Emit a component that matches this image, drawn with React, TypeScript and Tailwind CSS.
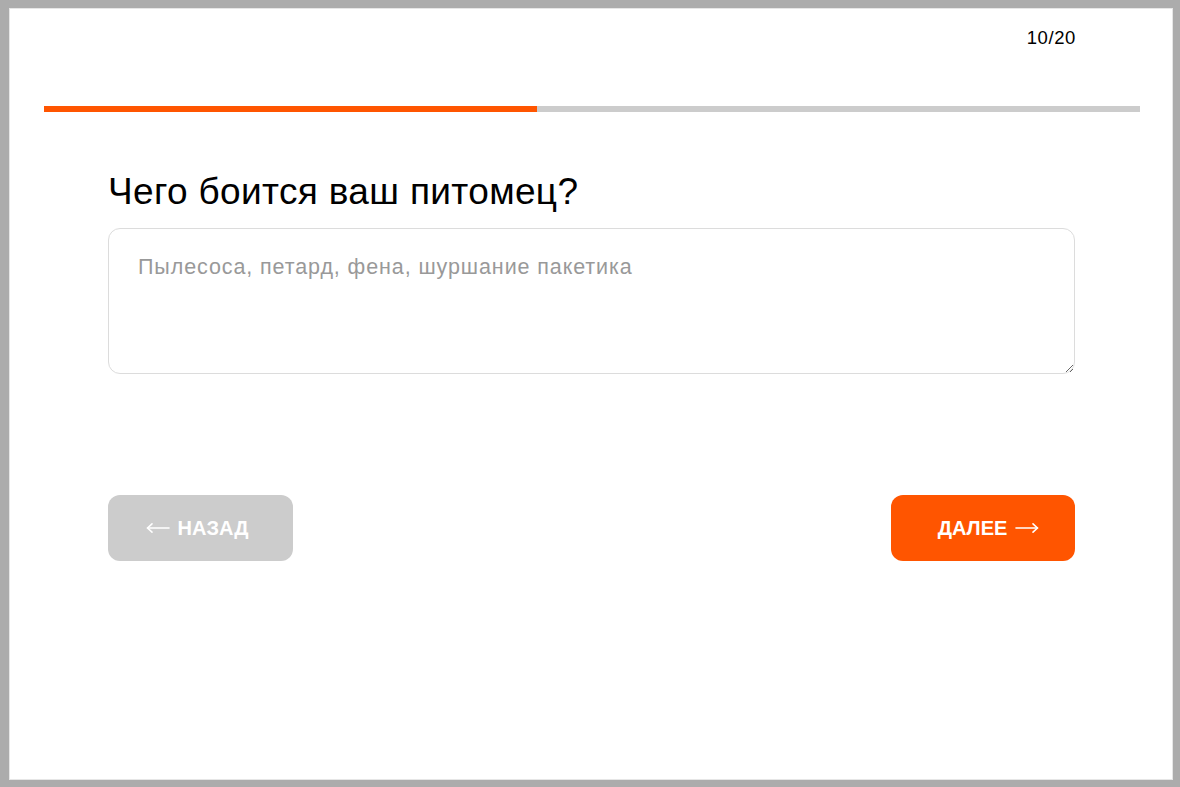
import React, { useState } from 'react';

function LongArrow({ dir }: { dir: 'left' | 'right' }) {
  return (
    <svg width="24" height="12" viewBox="0 0 24 12" fill="none" stroke="currentColor" strokeWidth="1.6" strokeLinecap="round" strokeLinejoin="round">
      {dir === 'left' ? (
        <>
          <path d="M23 6H1.5" />
          <path d="M6 1.8L1.5 6L6 10.2" />
        </>
      ) : (
        <>
          <path d="M1 6h21.5" />
          <path d="M18 1.8L22.5 6L18 10.2" />
        </>
      )}
    </svg>
  );
}

export default function App() {
  const [answer, setAnswer] = useState('');
  const step = 10;
  const total = 20;

  return (
    <div className="min-h-screen w-full bg-[#acacac] pt-[8px] pl-[9px] pr-[7px] pb-[7px] font-['Liberation_Sans',Arial,sans-serif]">
      <div className="h-[772px] bg-white border border-[#e6e6e6]">
        {/* Counter */}
        <div className="flex justify-end pr-[96px] pt-[19px]">
          <span className="text-[18.5px] leading-[20px] tracking-[0.6px] text-black">{step}/{total}</span>
        </div>

        {/* Progress */}
        <div className="ml-[34px] mr-[32px] mt-[58px] flex h-[6px] bg-[#cccccc]">
          <div className="h-full bg-[#ff5500]" style={{ width: `${((step - 1) / total) * 100}%` }} />
        </div>

        <main className="px-[98px] pt-[58px]">
          <h1 className="text-[37px] leading-[44px] tracking-[0.35px] text-black">Чего боится ваш питомец?</h1>

          <textarea
            value={answer}
            onChange={(e) => setAnswer(e.target.value)}
            placeholder="Пылесоса, петард, фена, шуршание пакетика"
            className="mt-[14px] block h-[146px] w-[967px] rounded-[12px] border border-[#dcdcdc] px-[29px] pt-[25px] pb-[10px] text-[21.5px] leading-[26px] tracking-[0.9px] text-black outline-none placeholder:text-[#999999]"
          />

          <div className="mt-[121px] flex w-[967px] items-center justify-between">
            <button className="flex h-[66px] w-[185px] items-center justify-center gap-[8px] rounded-[12px] bg-[#cccccc] pr-[7px] text-[20px] font-bold text-white">
              <LongArrow dir="left" />
              НАЗАД
            </button>
            <button className="flex h-[66px] w-[184px] items-center justify-center gap-[8px] rounded-[12px] bg-[#ff5500] pl-[11px] text-[20px] font-bold text-white">
              ДАЛЕЕ
              <LongArrow dir="right" />
            </button>
          </div>
        </main>
      </div>
    </div>
  );
}
